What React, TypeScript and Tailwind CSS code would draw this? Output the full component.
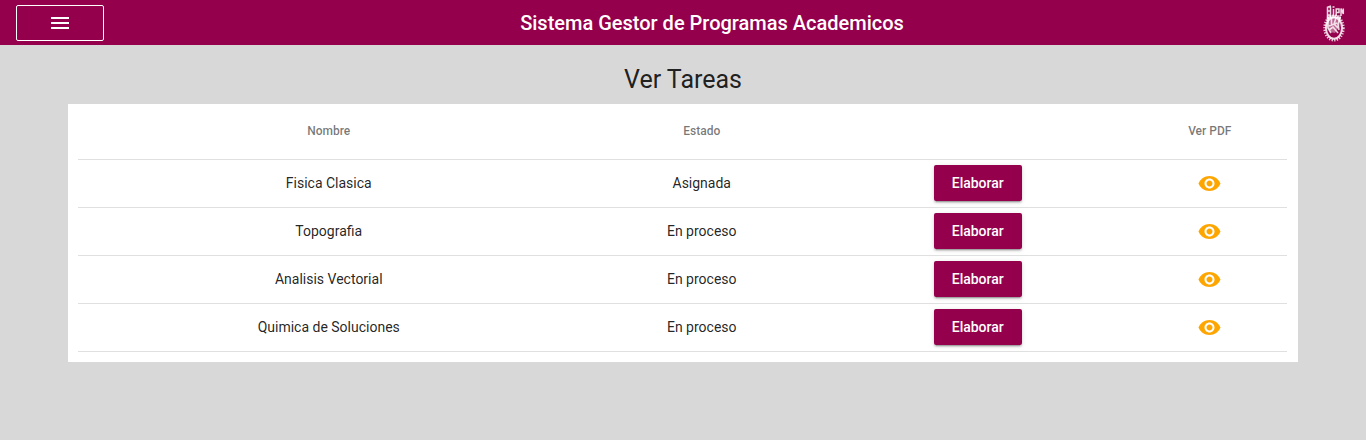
const tasks = [
  { name: 'Fisica Clasica', state: 'Asignada' },
  { name: 'Topografia', state: 'En proceso' },
  { name: 'Analisis Vectorial', state: 'En proceso' },
  { name: 'Quimica de Soluciones', state: 'En proceso' },
];

function Crest() {
  return (
    <svg className="h-[38px] w-[22px]" viewBox="0 0 22 38" fill="none" stroke="#fff">
      <ellipse cx="11" cy="24" rx="9.5" ry="12.3" strokeWidth="2.4" strokeDasharray="1.3 1.3" opacity=".8" />
      <ellipse cx="11" cy="24" rx="8" ry="10.8" strokeWidth="2" opacity=".85" />
      <path d="M4 11h14v5l-2 7-4 6-5-1-4-6z" fill="#fff" stroke="none" opacity=".4" />
      <path d="M4.5 3v12M7.5 3v10M4 3.5l4-1.5M4 7h4M4 11h4M10.5 12V5M9.5 3h2M13.2 12V5h2.8v3.5h-2.5M18 12V4.5l2.3 5.5V4.5" strokeWidth="1.5" opacity=".85" />
      <path d="M4 13.5h14M5 14v10l3 5M8.5 14v8M13 14l-2 6 4 4M17 14l-2 6 1 6M6 22l8-3M6 26l4-3 5 6" strokeWidth="1.6" opacity=".8" />
    </svg>
  );
}

function Eye() {
  return (
    <svg className="mx-auto block size-6 fill-[#ffa500]" viewBox="0.5 -0.5 24 24">
      <path d="M12 4.5C7 4.5 2.73 7.61 1 12c1.73 4.39 6 7.5 11 7.5s9.27-3.11 11-7.5c-1.73-4.39-6-7.5-11-7.5zM12 17c-2.76 0-5-2.24-5-5s2.24-5 5-5 5 2.24 5 5-2.24 5-5 5zm0-8c-1.66 0-3 1.34-3 3s1.34 3 3 3 3-1.34 3-3-1.34-3-3-3z" />
    </svg>
  );
}

export default function App() {
  return (
    <div className="min-h-screen bg-[#d8d8d8] font-[Roboto,sans-serif] text-black/87">
      <header className="flex h-[45px] items-center justify-between bg-[#94004c] pr-[21px] pl-4 text-white">
        <button aria-label="Menu" className="flex h-9 w-[88px] items-center justify-center rounded-xs border border-white">
          <svg className="size-6 fill-white" viewBox="0 0 24 24">
            <path d="M3 18h18v-2H3v2zm0-5h18v-2H3v2zm0-7v2h18V6H3z" />
          </svg>
        </button>
        <h1 className="-ml-[3px] text-[20px] leading-8 font-medium">Sistema Gestor de Programas Academicos</h1>
        <Crest />
      </header>
      <main className="px-[68px] pt-[19px]">
        <h2 className="mb-2 text-center text-[25px] leading-8">Ver Tareas</h2>
        <section className="bg-white pr-[11px] pb-[10px] pl-[10px]">
          <table className="w-full table-fixed border-separate border-spacing-0 text-center text-sm">
            <colgroup>
              <col className="w-[501px]" />
              <col className="w-[245px]" />
              <col className="w-[308px]" />
              <col className="w-[155px]" />
            </colgroup>
            <thead>
              <tr className="h-14 text-xs text-black/54">
                <th className="border-b border-black/12 p-0 pb-px pl-[0.5px] font-medium">Nombre</th>
                <th className="border-b border-black/12 p-0 pb-px pl-[0.5px] font-medium">Estado</th>
                <th className="border-b border-black/12 p-0 font-medium" />
                <th className="border-b border-black/12 p-0 pb-px pl-[0.5px] font-medium">Ver PDF</th>
              </tr>
            </thead>
            <tbody>
              {tasks.map((task) => (
                <tr key={task.name} className="h-12">
                  <td className="border-b border-black/12 p-0 pb-px pl-[0.5px]">{task.name}</td>
                  <td className="border-b border-black/12 p-0 pb-px pl-[0.5px]">{task.state}</td>
                  <td className="border-b border-black/12 p-0 pb-px">
                    <button className="mx-auto block h-9 w-[88px] rounded-xs bg-[#94004c] pr-[0.5px] text-sm font-medium text-white shadow-[0_3px_1px_-2px_rgba(0,0,0,0.2),0_2px_2px_0_rgba(0,0,0,0.14),0_1px_5px_0_rgba(0,0,0,0.12)]">
                      Elaborar
                    </button>
                  </td>
                  <td className="border-b border-black/12 p-0 pb-px"><Eye /></td>
                </tr>
              ))}
            </tbody>
          </table>
        </section>
      </main>
    </div>
  );
}
